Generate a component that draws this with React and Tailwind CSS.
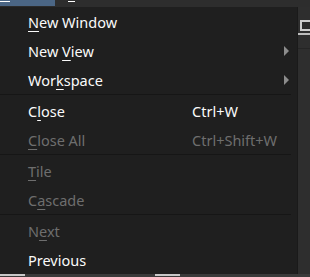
import React from "react";

const items = [
  { label: "New Window", u: 0, enabled: true },
  { label: "New View", u: 4, enabled: true, sub: true },
  { label: "Workspace", u: 3, enabled: true, sub: true },
  { sep: true },
  { label: "Close", u: 1, enabled: true, key: "Ctrl+W" },
  { label: "Close All", u: 0, enabled: false, key: "Ctrl+Shift+W" },
  { sep: true },
  { label: "Tile", u: 0, enabled: false },
  { label: "Cascade", u: 1, enabled: false },
  { sep: true },
  { label: "Next", u: 1, enabled: false },
  { label: "Previous", u: -1, enabled: true },
];

const Label = ({ text, u }) => {
  if (u < 0) return <span>{text}</span>;
  return (
    <span>
      {text.slice(0, u)}
      <span className="underline underline-offset-[3px]">{text[u]}</span>
      {text.slice(u + 1)}
    </span>
  );
};

export default function App() {
  return (
    <div
      className="w-[310px] h-[277px] bg-[#2b2b2b] overflow-hidden flex flex-col"
      style={{ fontFamily: '"Segoe UI", "Noto Sans", sans-serif' }}
    >
      {/* menu bar */}
      <div className="h-[7px] flex shrink-0">
        <div className="w-[55px] h-[6px] bg-[#4b6685] relative">
          <div className="absolute left-0 top-[1px] w-[10px] h-px bg-white" />
        </div>
        <div className="flex-1 bg-[#2d2d2d] relative">
          <div className="absolute left-[13px] top-[1px] w-[7px] h-px bg-white" />
        </div>
      </div>

      <div className="flex flex-1 min-h-0">
        {/* dropdown */}
        <div className="w-[298px] h-[267px] bg-[#1f1f1f] shrink-0 flex flex-col border-r border-[#1a1a1a]">
          {items.map((it, i) =>
            it.sep ? (
              <div key={i} className="h-[2px] w-[291px] border-t border-[#161616] shrink-0" />
            ) : (
              <div
                key={i}
                className={`h-[29px] shrink-0 flex items-center pt-[2px] pl-[28px] pr-[7px] text-[14.5px] ${
                  it.enabled ? "text-[#fafafa]" : "text-[#6e6e6e]"
                }`}
              >
                <div className="w-[164px]">
                  <Label text={it.label} u={it.u} />
                </div>
                <div className="flex-1">{it.key}</div>
                {it.sub && (
                  <svg width="6" height="10" viewBox="0 0 6 10" className="-mt-[2px]">
                    <path d="M0 0 L5 5 L0 10 Z" fill="#8c8c8c" />
                  </svg>
                )}
              </div>
            )
          )}
        </div>

        {/* right background strip */}
        <div className="flex-1 bg-[#2e2e2e] flex flex-col">
          <div className="h-[13px]" />
          <div className="ml-[2px] w-[12px] h-[11px] border-2 border-[#cfcfcf] border-r-0" />
          <div className="mt-[2px] h-[2px] bg-[#bdbdbd]" />
          <div className="mt-[13px] h-px bg-[#252525]" />
        </div>
      </div>

      {/* bottom strip */}
      <div className="h-[3px] bg-[#3a3a3a] flex shrink-0">
        <div className="w-[25px] h-[2px] bg-[#c8c8c8]" />
        <div className="ml-[130px] w-[25px] h-[2px] bg-[#c8c8c8]" />
      </div>
    </div>
  );
}
